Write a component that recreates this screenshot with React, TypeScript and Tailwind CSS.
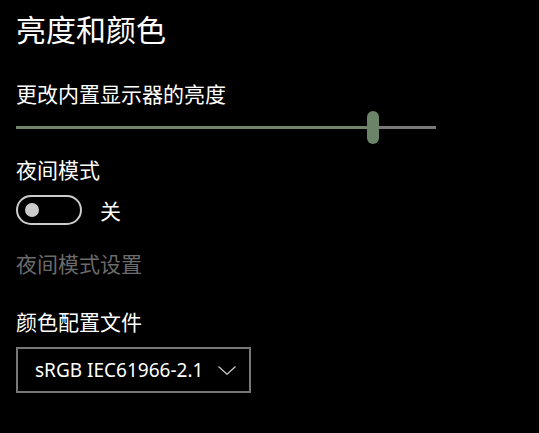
const cjk = "font-['Microsoft_YaHei','Noto_Sans_CJK_SC',sans-serif]";

export default function App() {
  return (
    <div className={`w-[539px] h-[433px] bg-black text-white pl-4 flex flex-col ${cjk}`}>
      {/* Header */}
      <h1 className="mt-[13px] text-[30px] leading-[30px] font-normal">亮度和颜色</h1>

      {/* Brightness */}
      <p className="mt-[40px] text-[21px] leading-[21px]">更改内置显示器的亮度</p>
      <div className="mt-[7px] flex items-center w-[420px] h-[33px]">
        <div className="h-[3px] w-[351px] bg-[#72836c]" />
        <div className="w-[12px] h-[33px] rounded-full bg-[#6b8368]" />
        <div className="h-[3px] flex-1 bg-[#7a7a7a]" />
      </div>

      {/* Night light */}
      <p className="mt-[15px] text-[21px] leading-[21px]">夜间模式</p>
      <div className="mt-[15px] flex items-center gap-[18px]">
        <div className="w-[66px] h-[30px] rounded-full border-2 border-[#cccccc] flex items-center pl-[7px]">
          <div className="w-[14px] h-[14px] rounded-full bg-[#cccccc]" />
        </div>
        <span className="text-[21px] leading-[21px]">关</span>
      </div>
      <p className="mt-[28px] text-[21px] leading-[21px] text-[#6b6b6b]">夜间模式设置</p>

      {/* Color profile */}
      <p className="mt-[37px] text-[21px] leading-[21px]">颜色配置文件</p>
      <div className="mt-[15px] w-[235px] h-[46px] border-2 border-[#777777] flex items-center justify-between pl-[17px] pr-[13px]">
        <span className="font-['Noto_Sans',sans-serif] text-[19px] leading-[20px]">sRGB IEC61966-2.1</span>
        <svg width="18" height="9" viewBox="0 0 18 9" fill="none" className="mt-[1px]">
          <polyline points="0.5,0.5 9,8.3 17.5,0.5" stroke="#c8c8c8" strokeWidth="1.2" />
        </svg>
      </div>
    </div>
  );
}
